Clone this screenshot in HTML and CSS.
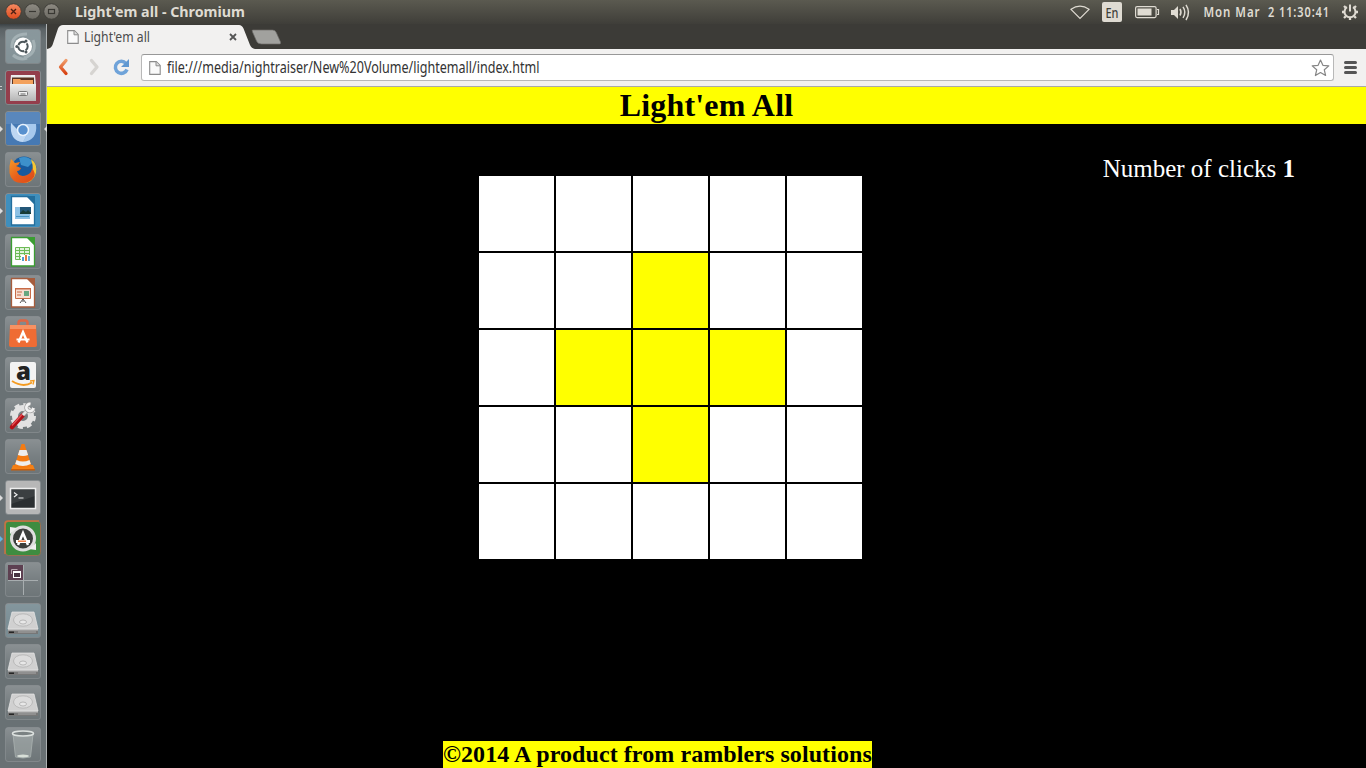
FILE: index.html
```html
<!DOCTYPE html>
<html lang="en">
<head>
<meta charset="utf-8">
<title>Light'em all</title>
<link rel="stylesheet" href="styles.css">
</head>
<body>
<svg class="defs" width="0" height="0">
  <defs>
    <linearGradient id="shine" x1="0" y1="0" x2="0" y2="1"><stop offset="0" stop-color="#fff" stop-opacity=".22"/><stop offset=".5" stop-color="#fff" stop-opacity=".1"/><stop offset="1" stop-color="#fff" stop-opacity=".03"/></linearGradient>
    <linearGradient id="metal" x1="0" y1="0" x2="0" y2="1"><stop offset="0" stop-color="#eee"/><stop offset="1" stop-color="#b5b5b5"/></linearGradient>
    <linearGradient id="fire" x1="0" y1="0" x2="1" y2="1"><stop offset="0" stop-color="#f59a25"/><stop offset=".5" stop-color="#e8601c"/><stop offset="1" stop-color="#d9481a"/></linearGradient>
    <linearGradient id="back" x1="0" y1="0" x2="0" y2="1"><stop offset="0" stop-color="#ef9a68"/><stop offset="1" stop-color="#d84312"/></linearGradient>
    <linearGradient id="close" x1="0" y1="0" x2="0" y2="1"><stop offset="0" stop-color="#f68b62"/><stop offset="1" stop-color="#dd4a1c"/></linearGradient>
    <linearGradient id="knob" x1="0" y1="0" x2="0" y2="1"><stop offset="0" stop-color="#8e8b83"/><stop offset="1" stop-color="#6b6962"/></linearGradient>
    <symbol id="tile" viewBox="0 0 47 41"><rect x="5.500" y="3.500" width="35" height="34" rx="2.500" fill="url(#shine)" stroke="#8f9597" stroke-opacity=".6"/></symbol>
    <symbol id="drive" viewBox="0 0 47 41">
      <path d="M12 12h22l4 17H8z" fill="#d0d0d0" stroke="#e8e8e8" stroke-width=".7"/>
      <path d="M8 29h30v5H8z" fill="#777"/><path d="M8 29h30v1.500H8z" fill="#c2c2c2"/><path d="M9 31.500h5V33H9z" fill="#252525"/><path d="M18 32h18" stroke="#aaa"/>
      <ellipse cx="23" cy="20" rx="9.500" ry="6.200" fill="#dcdcdc" stroke="#b9b9b9"/><ellipse cx="23" cy="22" rx="3.500" ry="2" fill="#e8e8e8" stroke="#aaa" stroke-width=".8"/>
    </symbol>
    <symbol id="page" viewBox="0 0 12 14"><path d="M.7.6h6.600l3.900 3.900v8.900H.7z" fill="#fafafa" stroke="#8c8c8c" stroke-width="1.100"/><path d="M7 .8v4h4" fill="#ddd" stroke="#8c8c8c"/></symbol>
    <symbol id="sheet" viewBox="0 0 47 41"><path d="M11.500 6.500H28l6.500 7V35h-23z" fill="#fff" stroke="currentColor" stroke-width="1.300"/><path d="M26 6h9v9z" fill="currentColor"/></symbol>
  </defs>
</svg>

<header class="panel">
  <svg class="window-buttons" width="75" height="24">
    <g stroke="#403f3a"><circle cx="13.500" cy="11.500" r="7.800" fill="url(#close)"/><circle cx="32.500" cy="11.500" r="7.800" fill="url(#knob)"/><circle cx="51.500" cy="11.500" r="7.800" fill="url(#knob)"/></g>
    <path d="M11 9l5 5m0-5l-5 5" stroke="#4d2013" stroke-width="1.400"/><path d="M29 11.500h7" stroke="#393833" stroke-width="1.200"/><rect x="48.500" y="9.500" width="6" height="4" fill="none" stroke="#393833" stroke-width="1.200"/>
  </svg>
  <svg class="panel-title" width="200" height="24"><text x="0" y="17" textLength="170" lengthAdjust="spacingAndGlyphs">Light'em all - Chromium</text></svg>
  <svg class="indicators" width="306" height="24">
    <g fill="none" stroke="#dfdbd2" stroke-width="1.200">
      <path d="M11 9.300q9-6.200 18 0l-9 9z"/>
      <rect x="75.600" y="6.600" width="20.500" height="11" rx="1.500"/><path d="M97 9.500h1.500v5H97"/>
      <path d="M120 9q2 3.300 0 6.500m3-8.700q3.700 5.400 0 11m3-13q5 7.500 0 15.200" stroke-width="1.500"/>
    </g>
    <rect x="42" y="2" width="20" height="20" rx="2" fill="#dfdbd2"/>
    <text class="lang" x="45.500" y="17.500" textLength="13" lengthAdjust="spacingAndGlyphs">En</text>
    <rect x="77.500" y="8.500" width="14" height="7" fill="#dfdbd2"/>
    <path d="M111 10h3l4-4v13l-4-4h-3z" fill="#dfdbd2"/>
    <text class="clock" x="143.500" y="17" textLength="57" lengthAdjust="spacingAndGlyphs">Mon Mar</text>
    <text class="clock" x="208" y="17" textLength="62" lengthAdjust="spacingAndGlyphs">2 11:30:41</text>
    <g fill="none" stroke="#dfdbd2"><path d="M287 7.200a5.500 5.500 0 1 0 6 0" stroke-width="2"/><path d="M290 4.500v7" stroke-width="2"/><path d="M284 6l1.800 1.800M296 6l-1.800 1.800M282 12h2.500m11 0h2.500M284 18l1.800-1.800m10.200 1.800l-1.800-1.800M290 20v-2.500" stroke-width="2.300"/></g>
  </svg>
</header>

<div class="desktop">
  <nav class="launcher">
    <svg class="launch"><use href="#tile"/><rect x="6" y="4" width="34" height="33" rx="2" fill="#8fa1a8" opacity=".65"/><g fill="none" stroke="#c0cbce" stroke-width="3" opacity=".5"><path d="M12 22Q11 8 27 8M33 14q5 13-9 18M13 29q7 6 14 3"/></g><circle cx="23" cy="20.500" r="9" fill="#fff"/><circle cx="23" cy="20.500" r="4.700" fill="none" stroke="#4c565a" stroke-width="2" stroke-dasharray="8.500 1.340" stroke-dashoffset="4"/><circle cx="16.800" cy="20.500" r="1.500" fill="#4c565a"/><circle cx="26" cy="15" r="1.500" fill="#4c565a"/><circle cx="26" cy="26" r="1.500" fill="#4c565a"/></svg>
    <svg class="launch"><use href="#tile"/><rect x="6" y="4" width="34" height="33" rx="2" fill="#943e4c"/><path d="M11 8h24l1 10v15H10V18z" fill="url(#metal)"/><path d="M12 10.500h22V17H12z" fill="#5b3323"/><path d="M13 12h7l1 1h12v4H13z" fill="#f3a15d"/><rect x="10" y="17" width="26" height="17" fill="url(#metal)"/><rect x="18.500" y="24.500" width="9" height="4" rx="1" fill="#f2f2f2" stroke="#777"/><path d="M20.500 27h5" stroke="#666"/><path d="M0 19.500h2M0 22.500h2" stroke="#ccc"/></svg>
    <svg class="launch"><use href="#tile"/><rect x="6" y="4" width="34" height="33" rx="2" fill="#4679b3"/><path d="M6 6q0-2 2-2h30q2 0 2 2v10H6z" fill="#6b95c5" opacity=".5"/><path d="M11 15q0 18 12 19 12-1 12-18H23l-6 5z" fill="#91b9e4"/><path d="M11 15q-2 18 12 19l4-8-5 1z" fill="#bed7f2"/><path d="M23 16h13q2 16-13 18l5-9z" fill="#a7c9ed"/><circle cx="23" cy="22" r="6.200" fill="#e8f2fc"/><circle cx="23" cy="22" r="4.700" fill="#5790ce"/><path d="M0 18l3 3-3 3zM47 18l-3 3 3 3z" fill="#ddd"/></svg>
    <svg class="launch"><use href="#tile"/><circle cx="24" cy="20" r="12.500" fill="#175a9e"/><path d="M19 9q9-3 14 4l-5 5-7-2z" fill="#3d91cb"/><path d="M31 10q7 5 5 14-3 10-13 10l7-8q5-4 1-16z" fill="#f5c533"/><path d="M11 10l4 4 5-1q-1 3-4 4l5 2q-1 3-4 3 2 7 10 4 5-2 5-7 4 5 2 9-4 6-11 6Q11 34 9.500 24 9 16 11 10z" fill="url(#fire)"/></svg>
    <svg class="launch blue"><use href="#tile"/><rect x="6" y="4" width="34" height="33" rx="2" fill="#3f8fbd"/><use href="#sheet"/><path d="M15 17h15v12H15z" fill="#8dc1e4"/><path d="M20 17h11v7H20z" fill="#235778"/><path d="M20 23l3-3 3 2 2-2 3 3v1H20z" fill="#163b36"/><path d="M16 26.500h13" stroke="#4595c4"/><path d="M0 18l3 3-3 3z" fill="#ddd"/></svg>
    <svg class="launch green"><use href="#tile"/><use href="#sheet"/><path d="M15.500 16.500h14v12h-14zM15 19.500h15M15 22.500h15M15 25.500h15M19.500 17v12M24.500 17v12" fill="#e2f3dc" stroke="#6cbb55"/><path d="M21 24h10v6H21z" fill="#fff"/><path d="M22 26h2v4h-2z" fill="#4f9dd0"/><path d="M25 24h2v6h-2z" fill="#e47b40"/><path d="M28 25h2v5h-2z" fill="#6aaed6"/></svg>
    <svg class="launch brown"><use href="#tile"/><use href="#sheet"/><path d="M15.500 17h15v9.500h-15zM15 16.500h16" fill="#f7ddd0" stroke="#c86b47"/><path d="M17 20h5m-5 3h4" stroke="#c86b47"/><path d="M24 19h5v5h-5z" fill="#67a780"/><path d="M23 27l-3 4m3-4l3 4m-3-4v3" stroke="#555"/></svg>
    <svg class="launch"><use href="#tile"/><path d="M18.500 14v-4q0-2.500 2.500-2.500h4q2.500 0 2.500 2.500v4" fill="none" stroke="#de6543" stroke-width="2.500"/><path d="M10 12h26l1 20q0 2-2 2H11q-2 0-2-2z" fill="#ef6c34"/><path d="M10 12h26v4H10z" fill="#f79162"/><path d="M18.500 29.500L23 19l4.500 10.500" fill="none" stroke="#fff" stroke-width="2.400"/><path d="M16.500 26.500h13" stroke="#fff" stroke-width="2"/></svg>
    <svg class="launch"><use href="#tile"/><rect x="10" y="8" width="26" height="26" rx="2" fill="#f3f3f3"/><text class="amazon-a" x="16" y="26">a</text><path d="M12 27q11 7 20 1.500" fill="none" stroke="#f49b20" stroke-width="2"/><path d="M30 27l4-.5-1 4" fill="none" stroke="#f49b20" stroke-width="1.300"/></svg>
    <svg class="launch"><use href="#tile"/><circle cx="23" cy="21" r="8" fill="none" stroke="#e2e2e2" stroke-width="6"/><circle cx="23" cy="21" r="11.500" fill="none" stroke="#e2e2e2" stroke-width="3" stroke-dasharray="5 4.030"/><path d="M12 32l11-12" stroke="#b41117" stroke-width="4.500" stroke-linecap="round"/><path d="M12 30.500l10-11" stroke="#e75258" stroke-width="1.300"/><path d="M23 20l6-6.500" stroke="#aaa" stroke-width="4"/><path d="M23 20l6-6.500" stroke="#e8e8e8" stroke-width="2.500"/><path d="M30.500 9a3.600 3.600 0 1 0 3 4" fill="none" stroke="#999" stroke-width="4"/><path d="M30.500 9a3.600 3.600 0 1 0 3 4" fill="none" stroke="#f2f2f2" stroke-width="2.700"/></svg>
    <svg class="launch"><use href="#tile"/><path d="M13 29h20l2 5H11z" fill="#f58116"/><path d="M21.500 8h3l7 22q-8.500 4-17 0z" fill="#f47b13"/><path d="M19.500 14h7l1.600 5q-5 2-10.200 0zM16.500 24q6.500 3 13 0l1.300 4q-8 4-15.600 0z" fill="#eee"/><path d="M11 33h24v1.500H11z" fill="#c95d08"/></svg>
    <svg class="launch"><use href="#tile"/><rect x="6" y="4" width="34" height="33" rx="2" fill="#b7b7b7"/><rect x="10.500" y="11.500" width="25" height="20" fill="#2b2f31" stroke="#eee" stroke-width="1.500"/><path d="M11 12h24v7L11 27z" fill="#fff" opacity=".08"/><path d="M14 15.500l3 2.300-3 2.300M18.500 21h5" stroke="#eee" stroke-width="1.200" fill="none"/><path d="M0 18l3 3-3 3z" fill="#ddd"/></svg>
    <svg class="launch"><rect x="5.500" y="3.500" width="35" height="34" rx="3" fill="#3e8c40" stroke="#9a7052" stroke-width="1"/><path d="M5 36V6q0-3 3-3h31" fill="none" stroke="#c9743f" stroke-width="1.500"/><circle cx="23" cy="20.500" r="11.500" fill="#3b3e3c" stroke="#dedede" stroke-width="3"/><path d="M10 16V9l7 1zM36 25v7l-7-1z" fill="#eee"/><path d="M18 27l5-12 5 12" fill="none" stroke="#fff" stroke-width="2.500"/><path d="M16 23.500h14" stroke="#fff" stroke-width="3"/><path d="M18 23.200h8" stroke="#ed6b2a" stroke-width="1.300"/><path d="M0 18l3 3-3 3z" fill="#62b7e4"/></svg>
    <svg class="launch"><use href="#tile"/><rect x="8" y="6" width="15" height="15" fill="#5d4051"/><path d="M23.500 6v30M8 21.500h30" stroke="#a7adaf"/><rect x="13.500" y="13.500" width="7" height="5" fill="#493443" stroke="#fff"/><path d="M13 13h8" stroke="#fff" stroke-width="2"/><path d="M11.500 15v-4.500h6" fill="none" stroke="#b8a8b0"/></svg>
    <svg class="launch"><use href="#tile"/><rect x="6" y="4" width="34" height="33" rx="2" fill="#809ba5" opacity=".6"/><use href="#drive"/></svg>
    <svg class="launch"><use href="#tile"/><use href="#drive"/></svg>
    <svg class="launch"><use href="#tile"/><use href="#drive"/></svg>
    <svg class="launch trash"><use href="#tile"/><path d="M13 10h20l-2.500 23q-7.500 2-15 0z" fill="#a9b1b0" opacity=".55" stroke="#c7cfcc"/><ellipse cx="23" cy="9.500" rx="10.500" ry="2.500" fill="#7b8283" stroke="#dce1df" stroke-width="1.600"/><ellipse cx="23" cy="32" rx="6" ry="1.500" fill="#d8dfd8"/></svg>
  </nav>

  <main class="browser">
    <div class="tabs">
      <svg width="260" height="25">
        <path d="M0 25Q4 24.500 5.500 21L11 4.500Q12.500 1 16 1H192q3 0 4.500 3.500L203 21q1.500 3.500 5 4z" fill="#f2f1f0"/>
        <use href="#page" x="20" y="6" width="12" height="14"/>
        <text class="tab-text" x="37" y="18" textLength="66" lengthAdjust="spacingAndGlyphs">Light'em all</text>
        <path d="M183 10l6 6m0-6l-6 6" stroke="#555" stroke-width="1.800"/>
        <path d="M205.500 6h20q3 0 4 3l4 9q.500 2-1 2h-18q-4 0-5-3l-4-9q-.500-2 0-2z" fill="#a1a19e" stroke="#6d6c68" stroke-width=".7"/>
      </svg>
    </div>
    <div class="toolbar">
      <svg width="94" height="37"><path d="M19 11.500L13.500 18l5.500 6.500" fill="none" stroke="url(#back)" stroke-width="3.300" stroke-linecap="round" stroke-linejoin="round"/><path d="M44.500 11.500L50 18l-5.500 6.500" fill="none" stroke="#d6d4d1" stroke-width="3.300" stroke-linecap="round" stroke-linejoin="round"/><path d="M79 14.500a6 6 0 1 0 1 6" fill="none" stroke="#6fa3d9" stroke-width="3.500"/><path d="M82 10v8h-8z" fill="#6098d1"/></svg>
      <div class="address">
        <svg width="600" height="25"><use href="#page" x="7" y="6" width="12" height="14"/><text class="url" x="25" y="18" textLength="372.500" lengthAdjust="spacingAndGlyphs">file:///media/nightraiser/New%20Volume/lightemall/index.html</text></svg>
        <svg width="24" height="25"><path d="M11.500 5l2.400 5.300 5.900.6-4.500 3.900 1.300 5.700-5.100-3-5.100 3 1.300-5.700-4.500-3.900 5.900-.6z" fill="#fff" stroke="#858585" stroke-width="1.200" stroke-linejoin="round"/></svg>
      </div>
      <svg width="32" height="37"><path d="M11.500 13.500h10M11.500 18.500h10M11.500 23.500h10" stroke="#555" stroke-width="3" stroke-linecap="round"/></svg>
    </div>
    <section class="game">
      <h1>Light'em All</h1>
      <div class="play">
        <div class="board">
          <i></i><i></i><i></i><i></i><i></i>
          <i></i><i></i><i class="lit"></i><i></i><i></i>
          <i></i><i class="lit"></i><i class="lit"></i><i class="lit"></i><i></i>
          <i></i><i></i><i class="lit"></i><i></i><i></i>
          <i></i><i></i><i></i><i></i><i></i>
        </div>
        <p class="clicks">Number of clicks <b>1</b></p>
      </div>
      <footer>©2014 A product from ramblers solutions</footer>
    </section>
  </main>
</div>
</body>
</html>
```
FILE: styles.css
```css
* { box-sizing: border-box; }
body { margin: 0; width: 1366px; height: 768px; overflow: hidden; display: flex; flex-direction: column; background: #000; font-family: "Noto Sans", sans-serif; }
svg { display: block; flex: none; }
.panel { display: flex; height: 24px; flex: none; background: linear-gradient(#5b5a50, #3f3e39); }
.panel text { fill: #dfdbd2; }
.panel-title { font-weight: 700; font-size: 14px; }
.indicators { margin-left: auto; }
.clock { font-weight: 600; font-size: 14.5px; letter-spacing: 1.2px; }
.panel .lang { font-size: 13.5px; fill: #403f3a; font-weight: 500; }
.desktop { display: flex; height: 744px; }
.launcher { width: 47px; padding-top: 2px; flex: none; background: linear-gradient(#3c4245, #5b6265 5px, #697174 16px, #697174); border-right: 1px solid #aeb2b3; }
.launch { width: 47px; height: 41px; }
.trash { margin-top: 1px; }
.blue { color: #236e9c; }
.green { color: #3a9d31; }
.brown { color: #a65c3c; }
.amazon-a { font: 800 24px "Open Sans", sans-serif; fill: #222; }
.browser { flex: 1; display: flex; flex-direction: column; }
.tabs { height: 25px; background: #3c3b37; flex: none; }
.tab-text { font-size: 14.5px; fill: #4c4c4c; }
.toolbar { display: flex; height: 38px; flex: none; background: #f2f1f0; border-bottom: 1px solid #aaa9a7; }
.address { flex: 1; display: flex; justify-content: space-between; height: 27px; margin-top: 5px; border: 1px solid #b8b8b8; border-top-color: #989898; border-radius: 3px; background: #fff; }
.url { font-size: 16px; fill: #333; }
.game { flex: 1; display: flex; flex-direction: column; background: #000; font-family: "Liberation Serif", serif; }
h1 { margin: 0; height: 37px; line-height: 37px; background: #ff0; color: #000; text-align: center; font-size: 32px; letter-spacing: .16px; }
.play { display: flex; padding: 52px 71px 0 432px; justify-content: space-between; }
.board { display: grid; grid-template-columns: repeat(5, 75px); grid-auto-rows: 75px; gap: 2px; }
.board i { background: #fff; }
.board .lit { background: #ff0; }
.clicks { margin: -22px 0 0; color: #fff; font-size: 25px; line-height: 29px; }
footer { margin: auto 0 0 396px; width: 429px; height: 27px; line-height: 27px; background: #ff0; color: #000; font-weight: 700; font-size: 24px; letter-spacing: .08px; white-space: nowrap; }
```
